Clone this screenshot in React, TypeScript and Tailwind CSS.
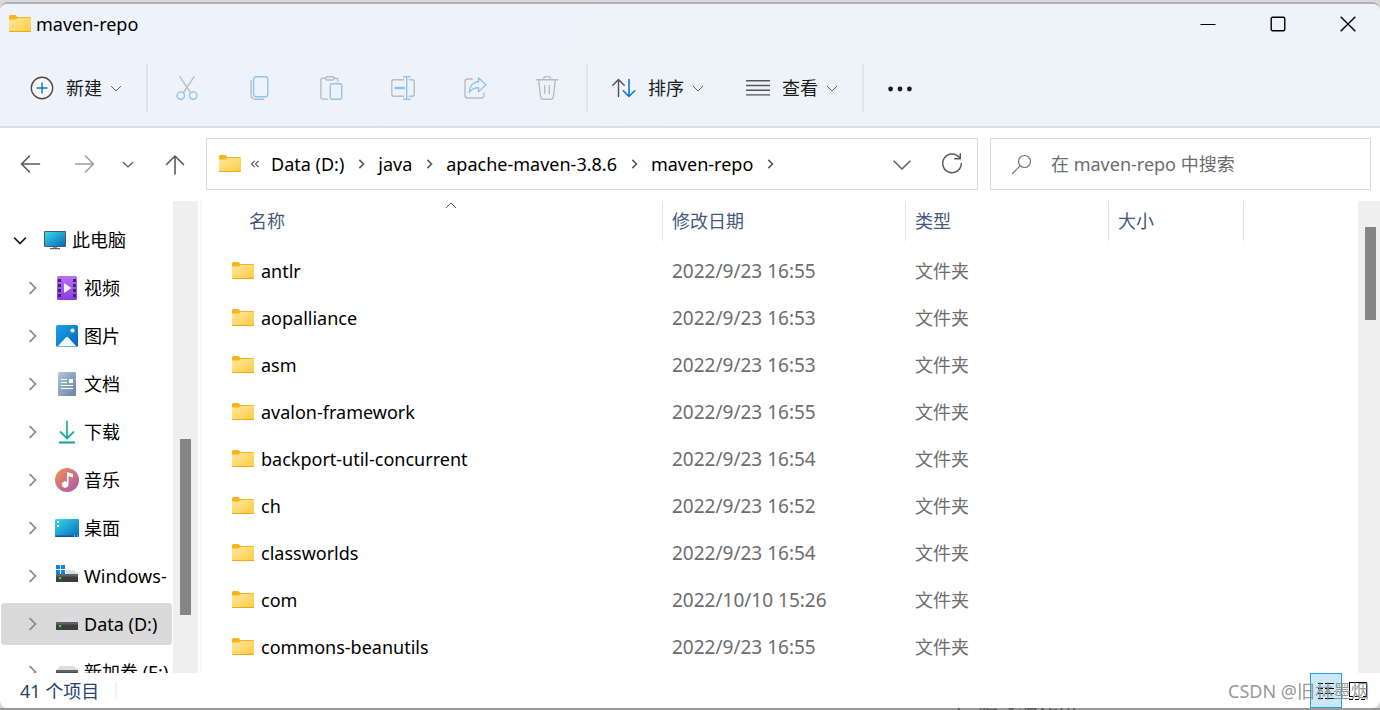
import type { ReactNode } from 'react'
import { useState } from 'react'
import clsx from 'clsx'

const folders = [
  { name: 'antlr', date: '2022/9/23 16:55' },
  { name: 'aopalliance', date: '2022/9/23 16:53' },
  { name: 'asm', date: '2022/9/23 16:53' },
  { name: 'avalon-framework', date: '2022/9/23 16:55' },
  { name: 'backport-util-concurrent', date: '2022/9/23 16:54' },
  { name: 'ch', date: '2022/9/23 16:52' },
  { name: 'classworlds', date: '2022/9/23 16:54' },
  { name: 'com', date: '2022/10/10 15:26' },
  { name: 'commons-beanutils', date: '2022/9/23 16:55' }
]

const crumbs = ['Data (D:)', 'java', 'apache-maven-3.8.6', 'maven-repo']

const Icon = ({ children, className = 'w-6 h-6' }: { children: ReactNode; className?: string }) => (
  <svg
    className={clsx('shrink-0', className)}
    viewBox="0 0 24 24"
    fill="none"
    stroke="currentColor"
    strokeWidth={1.4}
    strokeLinecap="round"
    strokeLinejoin="round"
    aria-hidden="true"
  >
    {children}
  </svg>
)

const Chevron = ({ dir, className, width = 1 }: { dir: 'down' | 'right' | 'up'; className: string; width?: number }) => {
  const d = { down: 'M1 4l5 5 5-5', right: 'M4 1l5 5-5 5', up: 'M1 8l5-5 5 5' }[dir]
  return (
    <svg className={clsx('shrink-0', className)} viewBox="0 0 12 12" fill="none" stroke="currentColor" strokeWidth={width} aria-hidden="true">
      <path d={d} />
    </svg>
  )
}

const FolderIcon = () => (
  <svg className="w-[22px] h-[18px] shrink-0" viewBox="0 0 22 18" aria-hidden="true">
    <defs>
      <linearGradient id="folder" x1="0" y1="0" x2="1" y2="1">
        <stop offset="0" stopColor="#ffe7a2" />
        <stop offset="1" stopColor="#ffcb3d" />
      </linearGradient>
    </defs>
    <path d="M0 1.5Q0 0 1.200 0H6.500L8.500 2H21Q22 2 22 3V8H0z" fill="#f8b41b" />
    <path d="M0 4.500H6.800L8.600 3H22V16.500Q22 17 21.500 17H.5Q0 17 0 16.500z" fill="url(#folder)" />
    <path d="M0 16H22V16.300Q22 17 21.300 17H.7Q0 17 0 16.300z" fill="#eda91c" />
  </svg>
)

const DriveShape = () => (
  <>
    <path d="M5 6h14l4 4.500H1z" fill="#dcdde2" />
    <rect x="1" y="10" width="22" height="8" rx=".6" fill="#3e3e3e" />
    <rect x="1" y="10" width="22" height="2.500" fill="#626262" />
    <rect x="4" y="13" width="2.200" height="2.200" fill="#2be02b" />
  </>
)

const treeIcons: Record<string, ReactNode> = {
  pc: (
    <>
      <defs>
        <linearGradient id="screen" x1="0" y1="0" x2="1" y2="1">
          <stop offset="0" stopColor="#35dbe8" />
          <stop offset="1" stopColor="#0b68bd" />
        </linearGradient>
      </defs>
      <path d="M10 18h4v2.500h-4z" fill="#8b959e" />
      <path d="M7 20h10v1.200H7z" fill="#59646e" />
      <rect x="1" y="3" width="22" height="16" rx="1" fill="#4a5963" />
      <rect x="2" y="4" width="20" height="14" fill="url(#screen)" />
    </>
  ),
  video: (
    <>
      <defs>
        <linearGradient id="film" x1="0" y1="0" x2="0" y2="1">
          <stop offset="0" stopColor="#ba70f5" />
          <stop offset="1" stopColor="#853de1" />
        </linearGradient>
      </defs>
      <rect x="2" y="0" width="20" height="24" rx="1.500" fill="url(#film)" />
      <path
        d="M3 3h3v3H3zM3 8h3v3H3zM3 13h3v3H3zM3 18h3v3H3zM18 3h3v3h-3zM18 8h3v3h-3zM18 13h3v3h-3zM18 18h3v3h-3z"
        fill="#44216f"
      />
      <path d="M9 7l7.500 5L9 17z" fill="#f3ecfb" />
    </>
  ),
  picture: (
    <>
      <defs>
        <linearGradient id="sky" x1="0" y1="0" x2="1" y2="1">
          <stop offset="0" stopColor="#1ca4e8" />
          <stop offset="1" stopColor="#0960ba" />
        </linearGradient>
      </defs>
      <rect x="1" y="1" width="22" height="22" rx="1.800" fill="url(#sky)" />
      <path d="M2.500 22.500l8.500-9.300q1-1 2 0l8.500 9.300z" fill="#f0f8ff" />
      <circle cx="17.500" cy="6.500" r="2.100" fill="#fff" />
    </>
  ),
  document: (
    <>
      <defs>
        <linearGradient id="page" x1="0" y1="0" x2="1" y2="1">
          <stop offset="0" stopColor="#b1c7dc" />
          <stop offset="1" stopColor="#6682a2" />
        </linearGradient>
      </defs>
      <rect x="3" y="0" width="18" height="24" rx="1.500" fill="url(#page)" />
      <path d="M6 7.500h6M6 10.500h6M6 13.500h12M6 16.500h12" stroke="#fff" strokeWidth="1.200" />
      <rect x="14" y="7" width="4" height="4" fill="#fff" />
    </>
  ),
  download: (
    <>
      <defs>
        <linearGradient id="arrow" gradientUnits="userSpaceOnUse" x1="0" y1="0" x2="0" y2="24">
          <stop offset="0" stopColor="#2dc58c" />
          <stop offset="1" stopColor="#0c9f98" />
        </linearGradient>
      </defs>
      <path d="M11.500 1h1v17h-1z" fill="url(#arrow)" stroke="url(#arrow)" strokeWidth=".8" />
      <path d="M5 11.500l7 7 7-7M4 22.500h16" fill="none" stroke="url(#arrow)" strokeWidth="1.800" />
    </>
  ),
  music: (
    <>
      <defs>
        <linearGradient id="disc" x1="0" y1="0" x2="1" y2="1">
          <stop offset="0.100" stopColor="#ef8b55" />
          <stop offset="1" stopColor="#a458b5" />
        </linearGradient>
      </defs>
      <circle cx="12" cy="12" r="12" fill="url(#disc)" />
      <path d="M12 4l6 2v3.500l-4.500-1.200V16.500a3.300 3.300 0 1 1-1.500-2.700z" fill="#fff" />
    </>
  ),
  desktop: (
    <>
      <rect x="0" y="3" width="24" height="18" rx="1.200" fill="url(#screen)" />
      <path d="M0 19.500h24v.6q0 .9-1 .9H1q-1 0-1-.9z" fill="#0c5799" />
      <path d="M2 5h2v2H2zM2 9h2v2H2z" fill="#fff" />
      <path d="M19 19.500h1.200v1H19zM22 19.500h1v1h-1z" fill="#fff" />
    </>
  ),
  windows: (
    <>
      <DriveShape />
      <path d="M1 0h10v10H1z" fill="#fff" />
      <path d="M1 1h4v4H1zM6 1h4v4H6zM1 6h4v4H1zM6 6h4v4H6z" fill="#0c87db" />
    </>
  ),
  drive: <DriveShape />
}

const treeItems = [
  { label: '视频', icon: 'video' },
  { label: '图片', icon: 'picture' },
  { label: '文档', icon: 'document' },
  { label: '下载', icon: 'download' },
  { label: '音乐', icon: 'music' },
  { label: '桌面', icon: 'desktop' },
  { label: 'Windows-', icon: 'windows' },
  { label: 'Data (D:)', icon: 'drive' },
  { label: '新加卷 (E:)', icon: 'drive' }
]

const BLUE = '#8fc4ee'

// cut, copy, paste, rename, share, delete: all greyed out while nothing is selected
const fileActions: { label: string; art: ReactNode }[] = [
  {
    label: '剪切',
    art: (
      <>
        <path d="M5 .8l10.500 15.800M19 .8L8.500 16.600" />
        <circle cx="5.800" cy="19.600" r="3.700" stroke={BLUE} />
        <circle cx="18.200" cy="19.600" r="3.700" stroke={BLUE} />
      </>
    )
  },
  {
    label: '复制',
    art: (
      <>
        <path d="M4 4.500V19a4.300 4.300 0 0 0 4.300 4.300H16.500" />
        <rect x="6.600" y=".7" width="14.200" height="20" rx="2.500" stroke={BLUE} />
      </>
    )
  },
  {
    label: '粘贴',
    art: (
      <>
        <path d="M6.500 2.300H3.500a1.600 1.600 0 0 0-1.600 1.600V21.500a1.600 1.600 0 0 0 1.600 1.600h5M15 2.300h2.300a1.600 1.600 0 0 1 1.600 1.600v1.300" />
        <rect x="6.600" y=".7" width="8.400" height="3.300" rx="1.600" />
        <rect x="11.300" y="7.800" width="11.400" height="15.500" rx="1.600" stroke={BLUE} />
      </>
    )
  },
  {
    label: '重命名',
    art: (
      <>
        <path d="M12.800 3.700H2.800A2 2 0 0 0 .8 5.700v12.600a2 2 0 0 0 2 2h10M18.500 3.700h2.700a2 2 0 0 1 2 2v12.600a2 2 0 0 1-2 2h-2.700" />
        <path d="M15.700 1v22M12.500.7h6.500M12.500 23.300h6.500" stroke={BLUE} />
        <path d="M4.500 12h8.500" stroke={BLUE} strokeWidth="2.400" />
      </>
    )
  },
  {
    label: '共享',
    art: (
      <>
        <path d="M9.500 3H4.500A2.500 2.500 0 0 0 2 5.500v14A2.500 2.500 0 0 0 4.500 22h14a2.500 2.500 0 0 0 2.500-2.500V17" />
        <path d="M15.500 1.700l7.500 7-7.500 7v-3.900c-4-.2-6.700 1.400-9.200 4.400.3-5.500 3.300-10.100 9.200-10.500z" stroke={BLUE} />
      </>
    )
  },
  {
    label: '删除',
    art: (
      <path d="M1.300 3.700h21.400M8.300 3.500a3.700 3.300 0 0 1 7.400 0M3.700 4l1.900 17a2.500 2.500 0 0 0 2.500 2.200h7.800a2.500 2.500 0 0 0 2.500-2.200L20.300 4M9.700 9.500v8M14.300 9.500v8" />
    )
  }
]

const Divider = () => <div className="w-0.5 h-12 bg-[#dfe4ea]" />

const TitleBar = () => (
  <header className="flex items-start justify-between h-[42px] pt-[6px] pl-[9px] pr-6">
    <div className="flex items-center gap-[5px] h-7">
      <FolderIcon />
      <h1>maven-repo</h1>
    </div>
    <div className="flex items-center gap-[54px] h-7 text-black">
      <button type="button" aria-label="最小化">
        <svg className="w-4 h-4" viewBox="0 0 16 16" stroke="currentColor"><path d="M.5 8.500h15" /></svg>
      </button>
      <button type="button" aria-label="最大化">
        <svg className="w-4 h-4" viewBox="0 0 16 16" fill="none" stroke="currentColor" strokeWidth="1.400">
          <rect x="1.200" y="1.200" width="13.600" height="13.600" rx="1.500" />
        </svg>
      </button>
      <button type="button" aria-label="关闭">
        <svg className="w-4 h-4" viewBox="0 0 16 16" stroke="currentColor" strokeWidth="1.400"><path d="M.7.700l14.600 14.600M15.300.700L.7 15.300" /></svg>
      </button>
    </div>
  </header>
)

const MenuButton = ({ label, children }: { label: string; children: ReactNode }) => (
  <button type="button" className="flex items-center gap-3 h-12 text-[#1b1b1b]">
    {children}
    <span className="flex items-center gap-2">
      {label}
      <Chevron dir="down" className="w-3 h-3 text-[#5c5c5c]" />
    </span>
  </button>
)

const CommandBar = () => (
  <div className="flex items-center h-20 pt-1 pl-[30px]" role="toolbar">
    <MenuButton label="新建">
      <Icon className="w-6 h-6 text-[#4c4c4c]">
        <circle cx="12" cy="12" r="10.700" fill="#fafafa" />
        <path d="M12 7v10M7 12h10" stroke="#0c78d0" />
      </Icon>
    </MenuButton>
    <div className="w-6" />
    <Divider />
    <div className="flex px-[3px] text-[#b9bcc0]">
      {fileActions.map(({ label, art }) => (
        <button key={label} type="button" aria-label={label} disabled className="flex items-center justify-center w-[72px] h-12">
          <Icon>{art}</Icon>
        </button>
      ))}
    </div>
    <Divider />
    <div className="flex gap-[42px] px-6">
      <MenuButton label="排序">
        <Icon className="w-6 h-6 text-[#505050]">
          <path d="M6.500 20.500V3.500M.8 9.200l5.700-5.700 5.700 5.700" />
          <path d="M17 3.500v17M11.300 14.800l5.700 5.700 5.700-5.700" stroke="#0c78d0" strokeWidth="1.600" />
        </Icon>
      </MenuButton>
      <MenuButton label="查看">
        <Icon className="w-6 h-6 text-[#555]">
          <path d="M.5 4.800h23M.5 9.500h23M.5 14.200h23M.5 18.900h23" />
        </Icon>
      </MenuButton>
    </div>
    <Divider />
    <button type="button" aria-label="查看更多" className="pl-6 h-12 text-[#1b1b1b]">
      <svg className="w-6 h-6" viewBox="0 0 24 24" fill="currentColor">
        <circle cx="2.600" cy="13" r="2.400" />
        <circle cx="12" cy="13" r="2.400" />
        <circle cx="21.400" cy="13" r="2.400" />
      </svg>
    </button>
  </div>
)

const AddressRow = () => {
  const [query, setQuery] = useState('')

  return (
    <div className="flex items-center pt-[10px] pb-[11px] pl-[18px] pr-[9px] text-[#5a5a5a]">
      <div className="flex items-center w-[188px]">
        <button type="button" aria-label="后退" className="w-6 h-6">
          <Icon><path d="M21.500 12H3.500M11.500 4l-8 8 8 8" strokeWidth="1.600" /></Icon>
        </button>
        <button type="button" aria-label="前进" className="w-6 h-6 ml-[30px] text-[#a0a0a0]">
          <Icon><path d="M3.500 12h18M13.500 4l8 8-8 8" strokeWidth="1.600" /></Icon>
        </button>
        <button type="button" aria-label="最近浏览的位置" className="ml-[26px]">
          <Chevron dir="down" className="w-3 h-3" width={1.2} />
        </button>
        <button type="button" aria-label="上移" className="w-6 h-6 ml-[29px]">
          <Icon><path d="M12 22V4M3.500 12.500L12 4l8.500 8.500" strokeWidth="1.600" /></Icon>
        </button>
      </div>

      <div className="flex flex-1 items-center h-[52px] pl-3 pr-[13px] border border-[#d9d9d9]">
        <FolderIcon />
        <svg className="w-[10px] h-[10px] ml-[9px] mr-[11px]" viewBox="0 0 10 10" fill="none" stroke="currentColor" strokeWidth="1.200">
          <path d="M4.500 2l-3 3 3 3M8.500 2l-3 3 3 3" />
        </svg>
        <nav className="flex flex-1 items-center text-black">
          {crumbs.map(crumb => (
            <span key={crumb} className="flex items-center">
              <a href="#" className="whitespace-nowrap">{crumb}</a>
              <Chevron dir="right" className="w-[10px] h-[10px] mx-3 text-[#5a5a5a]" width={2} />
            </span>
          ))}
        </nav>
        <button type="button" aria-label="以前的位置">
          <Chevron dir="down" className="w-5 h-5" width={0.9} />
        </button>
        <button type="button" aria-label="刷新" className="ml-7">
          <Icon className="w-6 h-6">
            <path d="M19.200 5.500A9.300 9.300 0 1 0 21.300 11.500M20.300 1.700v5h-5.500" strokeWidth="1.500" />
          </Icon>
        </button>
      </div>

      <label className="flex items-center w-[381px] h-[52px] ml-3 pl-5 border border-[#d9d9d9]">
        <Icon className="w-6 h-6 text-[#777]">
          <circle cx="13.500" cy="9.500" r="6" strokeWidth="1.200" />
          <path d="M9 14l-7.500 7.500" strokeWidth="1.200" />
        </Icon>
        <input
          type="text"
          value={query}
          onChange={e => setQuery(e.target.value)}
          placeholder="在 maven-repo 中搜索"
          aria-label="搜索"
          className="flex-1 min-w-0 ml-4 outline-none placeholder:text-[#6d6d6d]"
        />
      </label>
    </div>
  )
}

const TreeIcon = ({ name }: { name: string }) => (
  <svg className="w-6 h-6 shrink-0" viewBox="0 0 24 24" aria-hidden="true">{treeIcons[name]}</svg>
)

const Sidebar = () => (
  <aside className="flex w-[202px] shrink-0 border-r-2 border-[#f7f7f7]">
    <nav className="flex-1 min-w-0 pt-[15px] overflow-hidden">
      <a href="#" className="flex items-center h-12 pl-[13px] whitespace-nowrap">
        <Chevron dir="down" className="w-[14px] h-[14px] mr-4 text-[#222]" width={1.5} />
        <TreeIcon name="pc" />
        <span className="ml-[5px]">此电脑</span>
      </a>
      <ul>
        {treeItems.map(({ label, icon }) => (
          <li key={label} className="h-12 py-[3px] px-px">
            <a
              href="#"
              className={clsx(
                'flex items-center h-[42px] pl-6 rounded-sm whitespace-nowrap',
                label === 'Data (D:)' && 'bg-[#d9d9d9]'
              )}
            >
              <Chevron dir="right" className="w-[14px] h-[14px] mr-4 text-[#8a8a8a]" width={1.5} />
              <TreeIcon name={icon} />
              <span className="ml-[5px]">{label}</span>
            </a>
          </li>
        ))}
      </ul>
    </nav>
    <div className="w-[25px] mr-[2px] pl-[7px] pt-[238px] bg-[#efefef]">
      <div className="w-[11px] h-44 bg-[#858585]" />
    </div>
  </aside>
)

const HeaderCell = ({ children }: { children?: ReactNode }) => (
  <th className="h-[46px] p-0 align-top font-normal text-left">
    <div className="flex items-center h-10 pl-[9px] border-r border-[#e5e5e5]">{children}</div>
  </th>
)

const FileTable = () => (
  <main className="relative flex-1 min-w-0 overflow-hidden">
    <Chevron dir="up" className="absolute left-[243px] -top-px w-3 h-3 text-[#5c5c5c]" />
    <table className="w-full table-fixed border-collapse">
      <colgroup>
        <col className="w-[461px]" />
        <col className="w-[243px]" />
        <col className="w-[203px]" />
        <col className="w-[135px]" />
        <col />
      </colgroup>
      <thead className="text-[#44597a]">
        <tr>
          <HeaderCell><span className="pl-[38px]">名称</span></HeaderCell>
          <HeaderCell>修改日期</HeaderCell>
          <HeaderCell>类型</HeaderCell>
          <HeaderCell>大小</HeaderCell>
          <th className="p-0" />
        </tr>
      </thead>
      <tbody className="text-[#6d6d6d]">
        {folders.map(({ name, date }) => (
          <tr key={name} className="h-[47px]">
            <td className="p-0 pl-[30px] text-black">
              <div className="flex items-center gap-[7px]">
                <FolderIcon />
                {name}
              </div>
            </td>
            <td className="p-0 pl-[9px] text-[19px]">{date}</td>
            <td className="p-0 pl-[9px]">文件夹</td>
            <td />
            <td />
          </tr>
        ))}
      </tbody>
    </table>
  </main>
)

const StatusBar = () => (
  <footer className="relative flex items-center justify-between h-[35px] pl-5 pr-[6px]">
    <div className="flex items-center gap-4 text-[#29436b]">
      <span>41 个项目</span>
      <div className="w-0.5 h-[17px] bg-[#f3f3f3]" />
    </div>
    <div className="flex items-center text-black">
      <button type="button" aria-label="详细信息" className="flex items-center justify-center w-8 h-[35px] border border-[#26a0da] bg-[#cbe8f6]">
        <svg className="w-[18px] h-[18px]" viewBox="0 0 18 18" stroke="currentColor" shapeRendering="crispEdges">
          <path d="M1 1.500h5M8 1.500h9M1 6.500h5M8 6.500h9M1 11.500h5M8 11.500h9M1 16.500h5M8 16.500h9" />
        </svg>
      </button>
      <button type="button" aria-label="大缩略图" className="flex items-center justify-center w-8 h-[35px]">
        <svg className="w-[18px] h-[18px]" viewBox="0 0 18 18" fill="none" stroke="currentColor" shapeRendering="crispEdges">
          <path d="M.5 13.500V.5h17v14h-4M0 14.500h4M6 14.500h4M0 17.500h4M6 17.500h4M12 17.500h4" />
        </svg>
      </button>
    </div>
    <span className="absolute right-[11px] bottom-[2px] leading-[30px] text-[#8a8a8a]/90">CSDN @旧林墨烟</span>
  </footer>
)

const App = () => {
  return (
    <div className="relative flex flex-col h-screen py-0.5 overflow-hidden bg-[#d9d9d9] font-['Noto_Sans','Noto_Sans_CJK_SC',sans-serif] text-[18px] leading-6 text-black">
      <div className="flex flex-col flex-1 min-h-0 overflow-hidden rounded-lg border-t-2 border-[#aeb1b5] bg-white">
        <div className="border-b-2 border-[#d9dfe4] bg-[linear-gradient(115deg,#edf2fb_30%,#edf3f8_50%)]">
          <TitleBar />
          <CommandBar />
        </div>
        <AddressRow />
        <div className="flex flex-1 min-h-0 overflow-hidden">
          <Sidebar />
          <FileTable />
          <div className="w-[22px] shrink-0 pl-[7px] pt-[26px] bg-[#efefef]">
            <div className="w-[11px] h-[93px] bg-[#858585]" />
          </div>
        </div>
        <StatusBar />
      </div>
      {/* page behind the window, only its top edge shows */}
      <div className="absolute inset-x-0 bottom-0 h-0.5 pl-[852px] overflow-hidden bg-[#999] text-xl leading-3 text-[#555]">
        mvn compile 编译源代码
      </div>
    </div>
  )
}

export default App
